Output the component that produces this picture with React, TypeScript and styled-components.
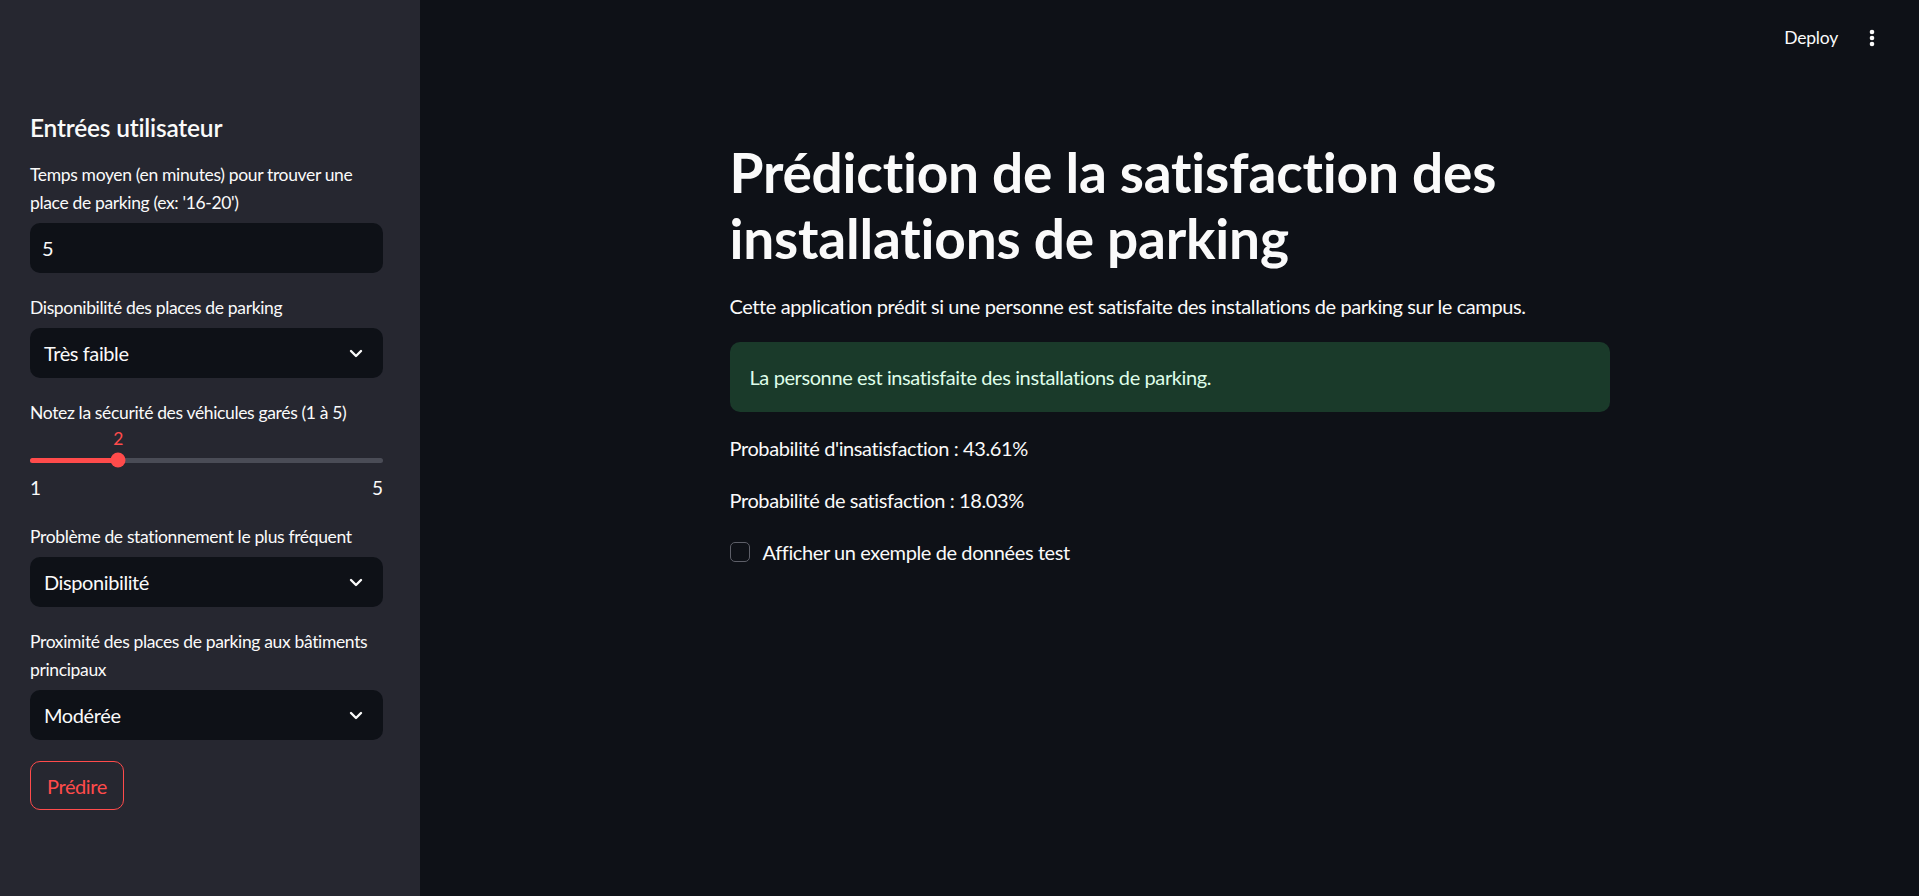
import React from "react";
import styled, { createGlobalStyle } from "styled-components";

const FONT = `"Source Sans Pro", Lato, "Noto Sans", sans-serif`;

const GlobalStyle = createGlobalStyle`
  html, body { margin: 0; padding: 0; background: #0e1117; }
  body { font-family: ${FONT}; color: #fafafa; }
  * { box-sizing: border-box; }
`;

const Shell = styled.div`
  display: flex;
  width: 100%;
  height: 100vh;
  overflow: hidden;
`;

const Sidebar = styled.aside`
  width: 420px;
  flex: 0 0 420px;
  background: #262730;
  padding: 113px 37px 0 30px;
  display: flex;
  flex-direction: column;
  gap: 21px;
`;

const SideTitle = styled.h2`
  margin: 0 0 -3px 0;
  font-size: 24.5px;
  line-height: 30px;
  font-weight: 600;
  color: #fafafa;
  letter-spacing: -0.2px;
`;

const Field = styled.div`
  display: flex;
  flex-direction: column;
  gap: 6px;
`;

const Label = styled.label`
  font-size: 17.5px;
  line-height: 28px;
  color: #fafafa;
  letter-spacing: -0.35px;
`;

const TextInput = styled.div`
  height: 50px;
  border-radius: 10px;
  background: #0e1117;
  display: flex;
  align-items: center;
  padding: 0 12px;
  font-size: 20px;
  color: #fafafa;
`;

const SelectBox = styled.div`
  height: 50px;
  border-radius: 10px;
  background: #0e1117;
  display: flex;
  align-items: center;
  justify-content: space-between;
  padding: 0 20px 0 14px;
  font-size: 20px;
  color: #fafafa;
  letter-spacing: -0.4px;
`;

const SliderBox = styled.div`
  display: flex;
  flex-direction: column;
  margin-top: -5px;
  margin-bottom: 2px;
`;

const ValueRow = styled.div`
  position: relative;
  height: 22px;
`;

const ThumbValue = styled.span`
  position: absolute;
  top: 0;
  transform: translateX(-50%);
  font-size: 17.5px;
  line-height: 22px;
  color: #ff4b4b;
`;

const TrackRow = styled.div`
  height: 20px;
  display: flex;
  align-items: center;
`;

const Track = styled.div`
  position: relative;
  width: 100%;
  height: 5px;
  border-radius: 3px;
  background: #4a4c56;
`;

const TrackFill = styled.div`
  position: absolute;
  left: 0;
  top: 0;
  bottom: 0;
  border-radius: 3px;
  background: #ff4b4b;
`;

const Thumb = styled.div`
  position: absolute;
  top: 50%;
  width: 15px;
  height: 15px;
  border-radius: 50%;
  background: #ff4b4b;
  transform: translate(-50%, -50%);
`;

const TickRow = styled.div`
  display: flex;
  justify-content: space-between;
  margin-top: 6px;
  font-size: 19px;
  line-height: 24px;
  color: #fafafa;
`;

const OutlineButton = styled.button`
  align-self: flex-start;
  height: 49px;
  padding: 0 16px;
  border: 1px solid #ff4b4b;
  border-radius: 10px;
  background: transparent;
  color: #ff4b4b;
  font-family: ${FONT};
  font-size: 20px;
  letter-spacing: -0.4px;
`;

const Main = styled.main`
  flex: 1;
  display: flex;
  flex-direction: column;
  min-width: 0;
`;

const Header = styled.header`
  height: 75px;
  display: flex;
  align-items: center;
  justify-content: flex-end;
  gap: 31px;
  padding-right: 44px;
`;

const DeployLink = styled.span`
  font-size: 17.5px;
  color: #fafafa;
  letter-spacing: -0.2px;
`;

const Content = styled.section`
  width: 880px;
  margin: 0 auto;
  padding-top: 64px;
  display: flex;
  flex-direction: column;
  gap: 20px;
`;

const Title = styled.h1`
  margin: 0 0 -1px 0;
  font-size: 55px;
  line-height: 66px;
  font-weight: 700;
  color: #fafafa;
  letter-spacing: -0.2px;
`;

const Text = styled.p`
  margin: 0;
  font-size: 20px;
  line-height: 32px;
  color: #fafafa;
  letter-spacing: -0.4px;
`;

const SuccessBox = styled.div`
  border-radius: 10px;
  background: #1a3a2a;
  padding: 19px 20px;
  font-size: 20px;
  line-height: 32px;
  color: #dffde9;
  letter-spacing: -0.4px;
`;

const CheckRow = styled.label`
  display: flex;
  align-items: center;
  gap: 13px;
  font-size: 20px;
  line-height: 32px;
  color: #fafafa;
  letter-spacing: -0.4px;
`;

const CheckBox = styled.span`
  width: 20px;
  height: 20px;
  border-radius: 5px;
  border: 1px solid #5d5f68;
  background: #0e1117;
`;

const Chevron = () => (
  <svg width="14" height="9" viewBox="0 0 14 9" fill="none">
    <path d="M2 2l5 5 5-5" stroke="#fafafa" strokeWidth="2.4" strokeLinecap="round" strokeLinejoin="round" />
  </svg>
);

const Dots = () => (
  <svg width="6" height="18" viewBox="0 0 6 18" fill="#fafafa">
    <circle cx="3" cy="3" r="2.3" />
    <circle cx="3" cy="9" r="2.3" />
    <circle cx="3" cy="15" r="2.3" />
  </svg>
);

const Select = ({ value }: { value: string }) => (
  <SelectBox>
    <span>{value}</span>
    <Chevron />
  </SelectBox>
);

export default function App() {
  const pct = 25;
  return (
    <>
      <GlobalStyle />
      <Shell>
        <Sidebar>
          <SideTitle>Entrées utilisateur</SideTitle>
          <Field>
            <Label>Temps moyen (en minutes) pour trouver une place de parking (ex: '16-20')</Label>
            <TextInput>5</TextInput>
          </Field>
          <Field>
            <Label>Disponibilité des places de parking</Label>
            <Select value="Très faible" />
          </Field>
          <Field>
            <Label>Notez la sécurité des véhicules garés (1 à 5)</Label>
            <SliderBox>
              <ValueRow>
                <ThumbValue style={{ left: `${pct}%` }}>2</ThumbValue>
              </ValueRow>
              <TrackRow>
                <Track>
                  <TrackFill style={{ width: `${pct}%` }} />
                  <Thumb style={{ left: `${pct}%` }} />
                </Track>
              </TrackRow>
              <TickRow>
                <span>1</span>
                <span>5</span>
              </TickRow>
            </SliderBox>
          </Field>
          <Field>
            <Label>Problème de stationnement le plus fréquent</Label>
            <Select value="Disponibilité" />
          </Field>
          <Field>
            <Label>Proximité des places de parking aux bâtiments principaux</Label>
            <Select value="Modérée" />
          </Field>
          <OutlineButton>Prédire</OutlineButton>
        </Sidebar>
        <Main>
          <Header>
            <DeployLink>Deploy</DeployLink>
            <Dots />
          </Header>
          <Content>
            <Title>Prédiction de la satisfaction des installations de parking</Title>
            <Text>Cette application prédit si une personne est satisfaite des installations de parking sur le campus.</Text>
            <SuccessBox>La personne est insatisfaite des installations de parking.</SuccessBox>
            <Text>Probabilité d'insatisfaction : 43.61%</Text>
            <Text>Probabilité de satisfaction : 18.03%</Text>
            <CheckRow>
              <CheckBox />
              Afficher un exemple de données test
            </CheckRow>
          </Content>
        </Main>
      </Shell>
    </>
  );
}
